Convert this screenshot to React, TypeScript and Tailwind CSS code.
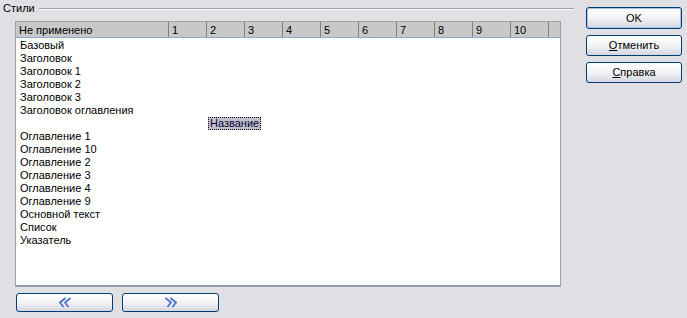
import React from "react";

const rowsTop = [
  "Базовый",
  "Заголовок",
  "Заголовок 1",
  "Заголовок 2",
  "Заголовок 3",
  "Заголовок оглавления",
];
const rowsBottom = [
  "Оглавление 1",
  "Оглавление 10",
  "Оглавление 2",
  "Оглавление 3",
  "Оглавление 4",
  "Оглавление 9",
  "Основной текст",
  "Список",
  "Указатель",
];

function XpButton({ children, isDefault = false, className = "" }: { children: React.ReactNode; isDefault?: boolean; className?: string }) {
  return (
    <div
      className={
        "flex items-center justify-center rounded-[3px] border border-[#003c74] bg-gradient-to-b from-white via-[#f3f3f6] to-[#d6d6e2] text-black " +
        (isDefault ? "shadow-[inset_0_0_0_1px_#a9c4ec] " : "") +
        className
      }
    >
      {children}
    </div>
  );
}

function Chevrons({ dir }: { dir: "left" | "right" }) {
  return (
    <svg width="16" height="11" viewBox="0 0 16 11">
      {dir === "left" ? (
        <g fill="none" stroke="#4f74cc" strokeWidth="1.8" strokeLinejoin="miter">
          <path d="M8.5 1 L3 5.5 L6.5 10" />
          <path d="M13.5 1 L8 5.5 L11.5 10" />
        </g>
      ) : (
        <g fill="none" stroke="#4f74cc" strokeWidth="1.8" strokeLinejoin="miter">
          <path d="M2.5 1 L8 5.5 L4.5 10" />
          <path d="M7.5 1 L13 5.5 L9.5 10" />
        </g>
      )}
    </svg>
  );
}

export default function App() {
  const cols = ["1", "2", "3", "4", "5", "6", "7", "8", "9", "10"];
  return (
    <div
      className="flex h-[318px] w-[687px] bg-[#e0dfe3] text-[11px] leading-[13px] text-black"
      style={{ fontFamily: '"Liberation Sans", Arial, sans-serif' }}
    >
      <div className="flex w-[574px] flex-col">
        <div className="flex h-[16px] items-center pl-[3px] pt-[1px]">
          <span>Стили</span>
          <div className="ml-[4px] mt-[1px] h-[2px] flex-1 border-t border-[#a0a0a0] border-b-white border-b" />
        </div>
        <div className="ml-[15px] mt-[5px] flex h-[266px] w-[546px] flex-col border border-[#a0a0a0] bg-white">
          <div className="flex h-[16px] bg-[#c8c8c8] border-b border-[#8fa9c8]">
            <div className="w-[153px] border-r border-[#808080] pl-[3px] pt-[2px]">Не применено</div>
            {cols.map((c) => (
              <div key={c} className="w-[38px] border-r border-[#808080] pl-[3px] pt-[2px]">
                {c}
              </div>
            ))}
            <div className="flex-1" />
          </div>
          <div className="flex flex-1 flex-col pt-[1px]">
            {rowsTop.map((r) => (
              <div key={r} className="h-[13px] pl-[4px]">
                {r}
              </div>
            ))}
            <div className="h-[13px] pl-[192px]">
              <span className="inline-block h-[13px] border border-dotted border-black bg-[#c0c0cc] px-[1px] leading-[11px] text-[#000033]">
                Название
              </span>
            </div>
            {rowsBottom.map((r) => (
              <div key={r} className="h-[13px] pl-[4px]">
                {r}
              </div>
            ))}
          </div>
          <div className="h-[1px] bg-[#7f9db9]" />
        </div>
        <div className="ml-[16px] mt-[6px] flex gap-[9px]">
          <XpButton className="h-[19px] w-[97px]">
            <Chevrons dir="left" />
          </XpButton>
          <XpButton className="h-[19px] w-[97px]">
            <Chevrons dir="right" />
          </XpButton>
        </div>
      </div>
      <div className="ml-[12px] mt-[7px] flex flex-col gap-[6px]">
        <XpButton isDefault className="h-[22px] w-[96px]">OK</XpButton>
        <XpButton className="h-[21px] w-[96px]">
          <span>
            <span className="underline">О</span>тменить
          </span>
        </XpButton>
        <XpButton className="h-[21px] w-[96px]">
          <span>
            <span className="underline">С</span>правка
          </span>
        </XpButton>
      </div>
    </div>
  );
}
